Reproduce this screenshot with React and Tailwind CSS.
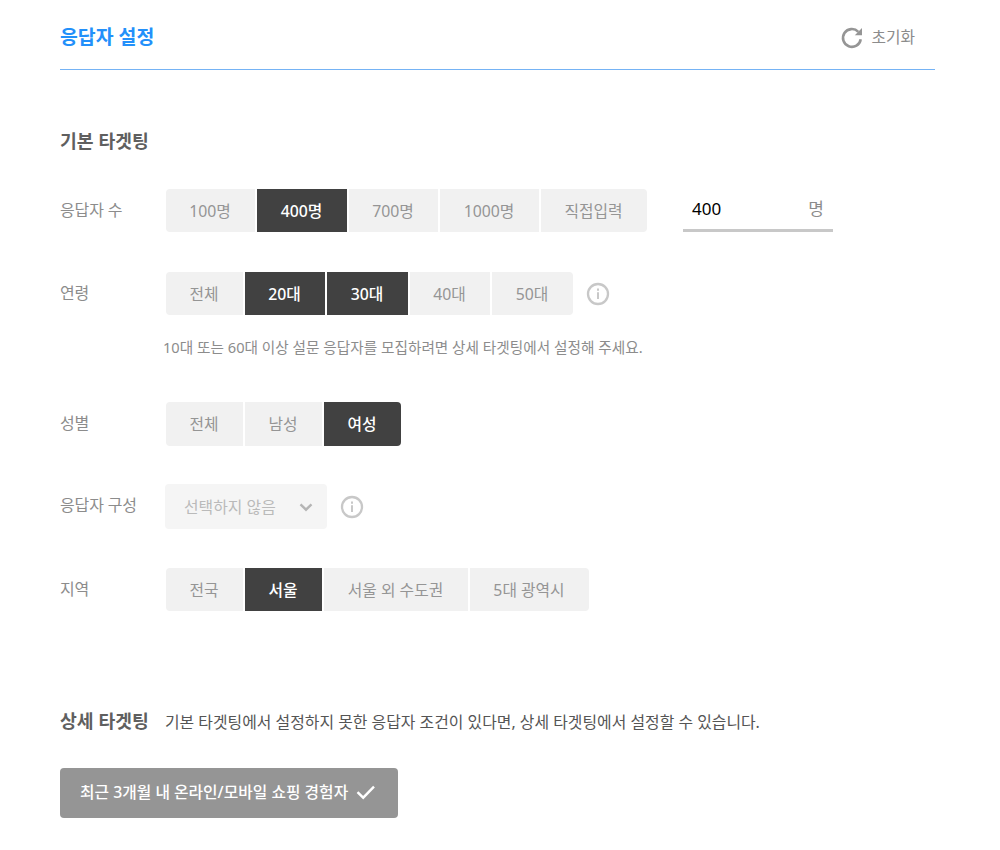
import { useState } from "react";

const counts = [
  { label: "100명", width: "w-[89px]" },
  { label: "400명", width: "w-[90px]" },
  { label: "700명", width: "w-[89px]" },
  { label: "1000명", width: "w-[99px]" },
  { label: "직접입력", width: "w-[106px]" },
];

const ages = [
  { label: "전체", width: "w-[77px]" },
  { label: "20대", width: "w-20" },
  { label: "30대", width: "w-[81px]" },
  { label: "40대", width: "w-20" },
  { label: "50대", width: "w-[81px]" },
];

const genders = [
  { label: "전체", width: "w-[77px]" },
  { label: "남성", width: "w-[77px]" },
  { label: "여성", width: "w-[77px]" },
];

const regions = [
  { label: "전국", width: "w-[77px]" },
  { label: "서울", width: "w-[77px]" },
  { label: "서울 외 수도권", width: "w-36" },
  { label: "5대 광역시", width: "w-[119px]" },
];

function ButtonGroup({ items, selected, onSelect, height = "h-[43px]" }) {
  return (
    <div className="ml-px flex gap-0.5 overflow-hidden rounded">
      {items.map((item) => (
        <button
          key={item.label}
          onClick={() => onSelect(item.label)}
          className={`${item.width} ${height} shrink-0 whitespace-nowrap pr-px text-center text-[15.8px] ${
            selected.includes(item.label)
              ? "bg-[#414141] font-medium text-white"
              : "bg-[#f1f1f1] text-[#959595]"
          }`}
        >
          {item.label}
        </button>
      ))}
    </div>
  );
}

function Row({ label, height = "h-[43px]", children }) {
  return (
    <div className={`flex ${height}`}>
      <div className="w-[105px] shrink-0 pt-[9px] tracking-[-0.15px] text-[#8c8c8c]">{label}</div>
      {children}
    </div>
  );
}

function InfoIcon() {
  return (
    <svg className="ml-[13px] mt-2.5 h-6 w-6 shrink-0" viewBox="0 0 24 24" fill="none" stroke="#c8c8c8">
      <circle cx="12" cy="12" r="10" strokeWidth="2.3" />
      <path d="M12 10.2v6.8M12 6.5v2.2" strokeWidth="2" />
    </svg>
  );
}

export default function App() {
  const [count, setCount] = useState("400명");
  const [age, setAge] = useState(["20대", "30대"]);
  const [gender, setGender] = useState("여성");
  const [region, setRegion] = useState("서울");

  const toggleAge = (label) => {
    setAge(age.includes(label) ? age.filter((a) => a !== label) : [...age, label]);
  };

  return (
    <div
      lang="ko"
      className="h-[850px] w-[1000px] overflow-hidden bg-white pl-[60px] pr-[65px] font-['Noto_Sans','Noto_Sans_CJK_KR',sans-serif] text-base leading-6"
    >
      <header className="flex h-[70px] justify-between border-b border-[#75b3f5] pr-5">
        <h1 className="pt-[22px] text-[19.4px] font-bold leading-[30px] text-[#2390fa]">응답자 설정</h1>
        <button className="flex h-6 items-center gap-[7px] mt-[25px] text-[#8c8c8c]">
          <svg className="mt-0.5 h-6 w-6" viewBox="0 0 24 24" fill="none">
            <path d="M20.7 13.2A8.9 8.9 0 1 1 18.3 5.8" stroke="#959595" strokeWidth="2.6" />
            <path d="M22 2v7.2h-7.2z" fill="#959595" />
          </svg>
          <span className="text-[15.8px]">초기화</span>
        </button>
      </header>

      <h2 className="mt-[57px] h-[62px] text-[18.3px] font-bold leading-7 text-[#5f5f5f]">기본 타겟팅</h2>

      <Row label="응답자 수">
        <ButtonGroup items={counts} selected={[count]} onSelect={setCount} />
        <div className="ml-9 flex h-[43px] w-[150px] justify-between border-b-[3px] border-[#c8c8c8] pl-[9px] pr-[9px] pt-2">
          <span className="text-[17px] text-black">400</span>
          <span className="text-[17px] text-[#8c8c8c]">명</span>
        </div>
      </Row>

      <div className="mt-10">
        <Row label="연령">
          <ButtonGroup items={ages} selected={age} onSelect={toggleAge} />
          <InfoIcon />
        </Row>
        <p className="ml-[103px] mt-5 text-[14.65px] text-[#8c8c8c]">
          10대 또는 60대 이상 설문 응답자를 모집하려면 상세 타겟팅에서 설정해 주세요.
        </p>
      </div>

      <div className="mt-[43px]">
        <Row label="성별" height="h-11">
          <ButtonGroup items={genders} selected={[gender]} onSelect={setGender} height="h-11" />
        </Row>
      </div>

      <div className="mt-[38px]">
        <Row label="응답자 구성" height="h-[45px]">
          <button className="flex h-[45px] w-[162px] items-center justify-between rounded bg-[#f5f5f5] pl-[19px] pr-[14px] text-[#bababa]">
            <span className="pt-px text-[15.9px]">선택하지 않음</span>
            <svg className="h-3.5 w-3.5" viewBox="0 0 14 14" fill="none">
              <path d="M1.5 4.3 7 9.7l5.5-5.4" stroke="#b5b5b5" strokeWidth="2.4" />
            </svg>
          </button>
          <div className="pt-px">
            <InfoIcon />
          </div>
        </Row>
      </div>

      <div className="mt-[39px]">
        <Row label="지역">
          <ButtonGroup items={regions} selected={[region]} onSelect={setRegion} />
        </Row>
      </div>

      <div className="mt-24 flex h-[61px] leading-7">
        <h2 className="w-[105px] text-[18.3px] font-bold text-[#5f5f5f]">상세 타겟팅</h2>
        <p className="whitespace-nowrap pt-px text-[15.9px] text-[#555]">
          기본 타겟팅에서 설정하지 못한 응답자 조건이 있다면, 상세 타겟팅에서 설정할 수 있습니다.
        </p>
      </div>

      <button className="flex h-[50px] w-[338px] items-center rounded bg-[#959595] pl-5 font-medium text-white">
        <span className="whitespace-nowrap pb-0.5 text-[15.8px]">최근 3개월 내 온라인/모바일 쇼핑 경험자</span>
        <svg className="ml-2 h-5 w-5" viewBox="0 0 20 20" fill="none">
          <path d="m1.5 9.2 5.7 5.5L18 3.6" stroke="white" strokeWidth="2.4" />
        </svg>
      </button>
    </div>
  );
}
